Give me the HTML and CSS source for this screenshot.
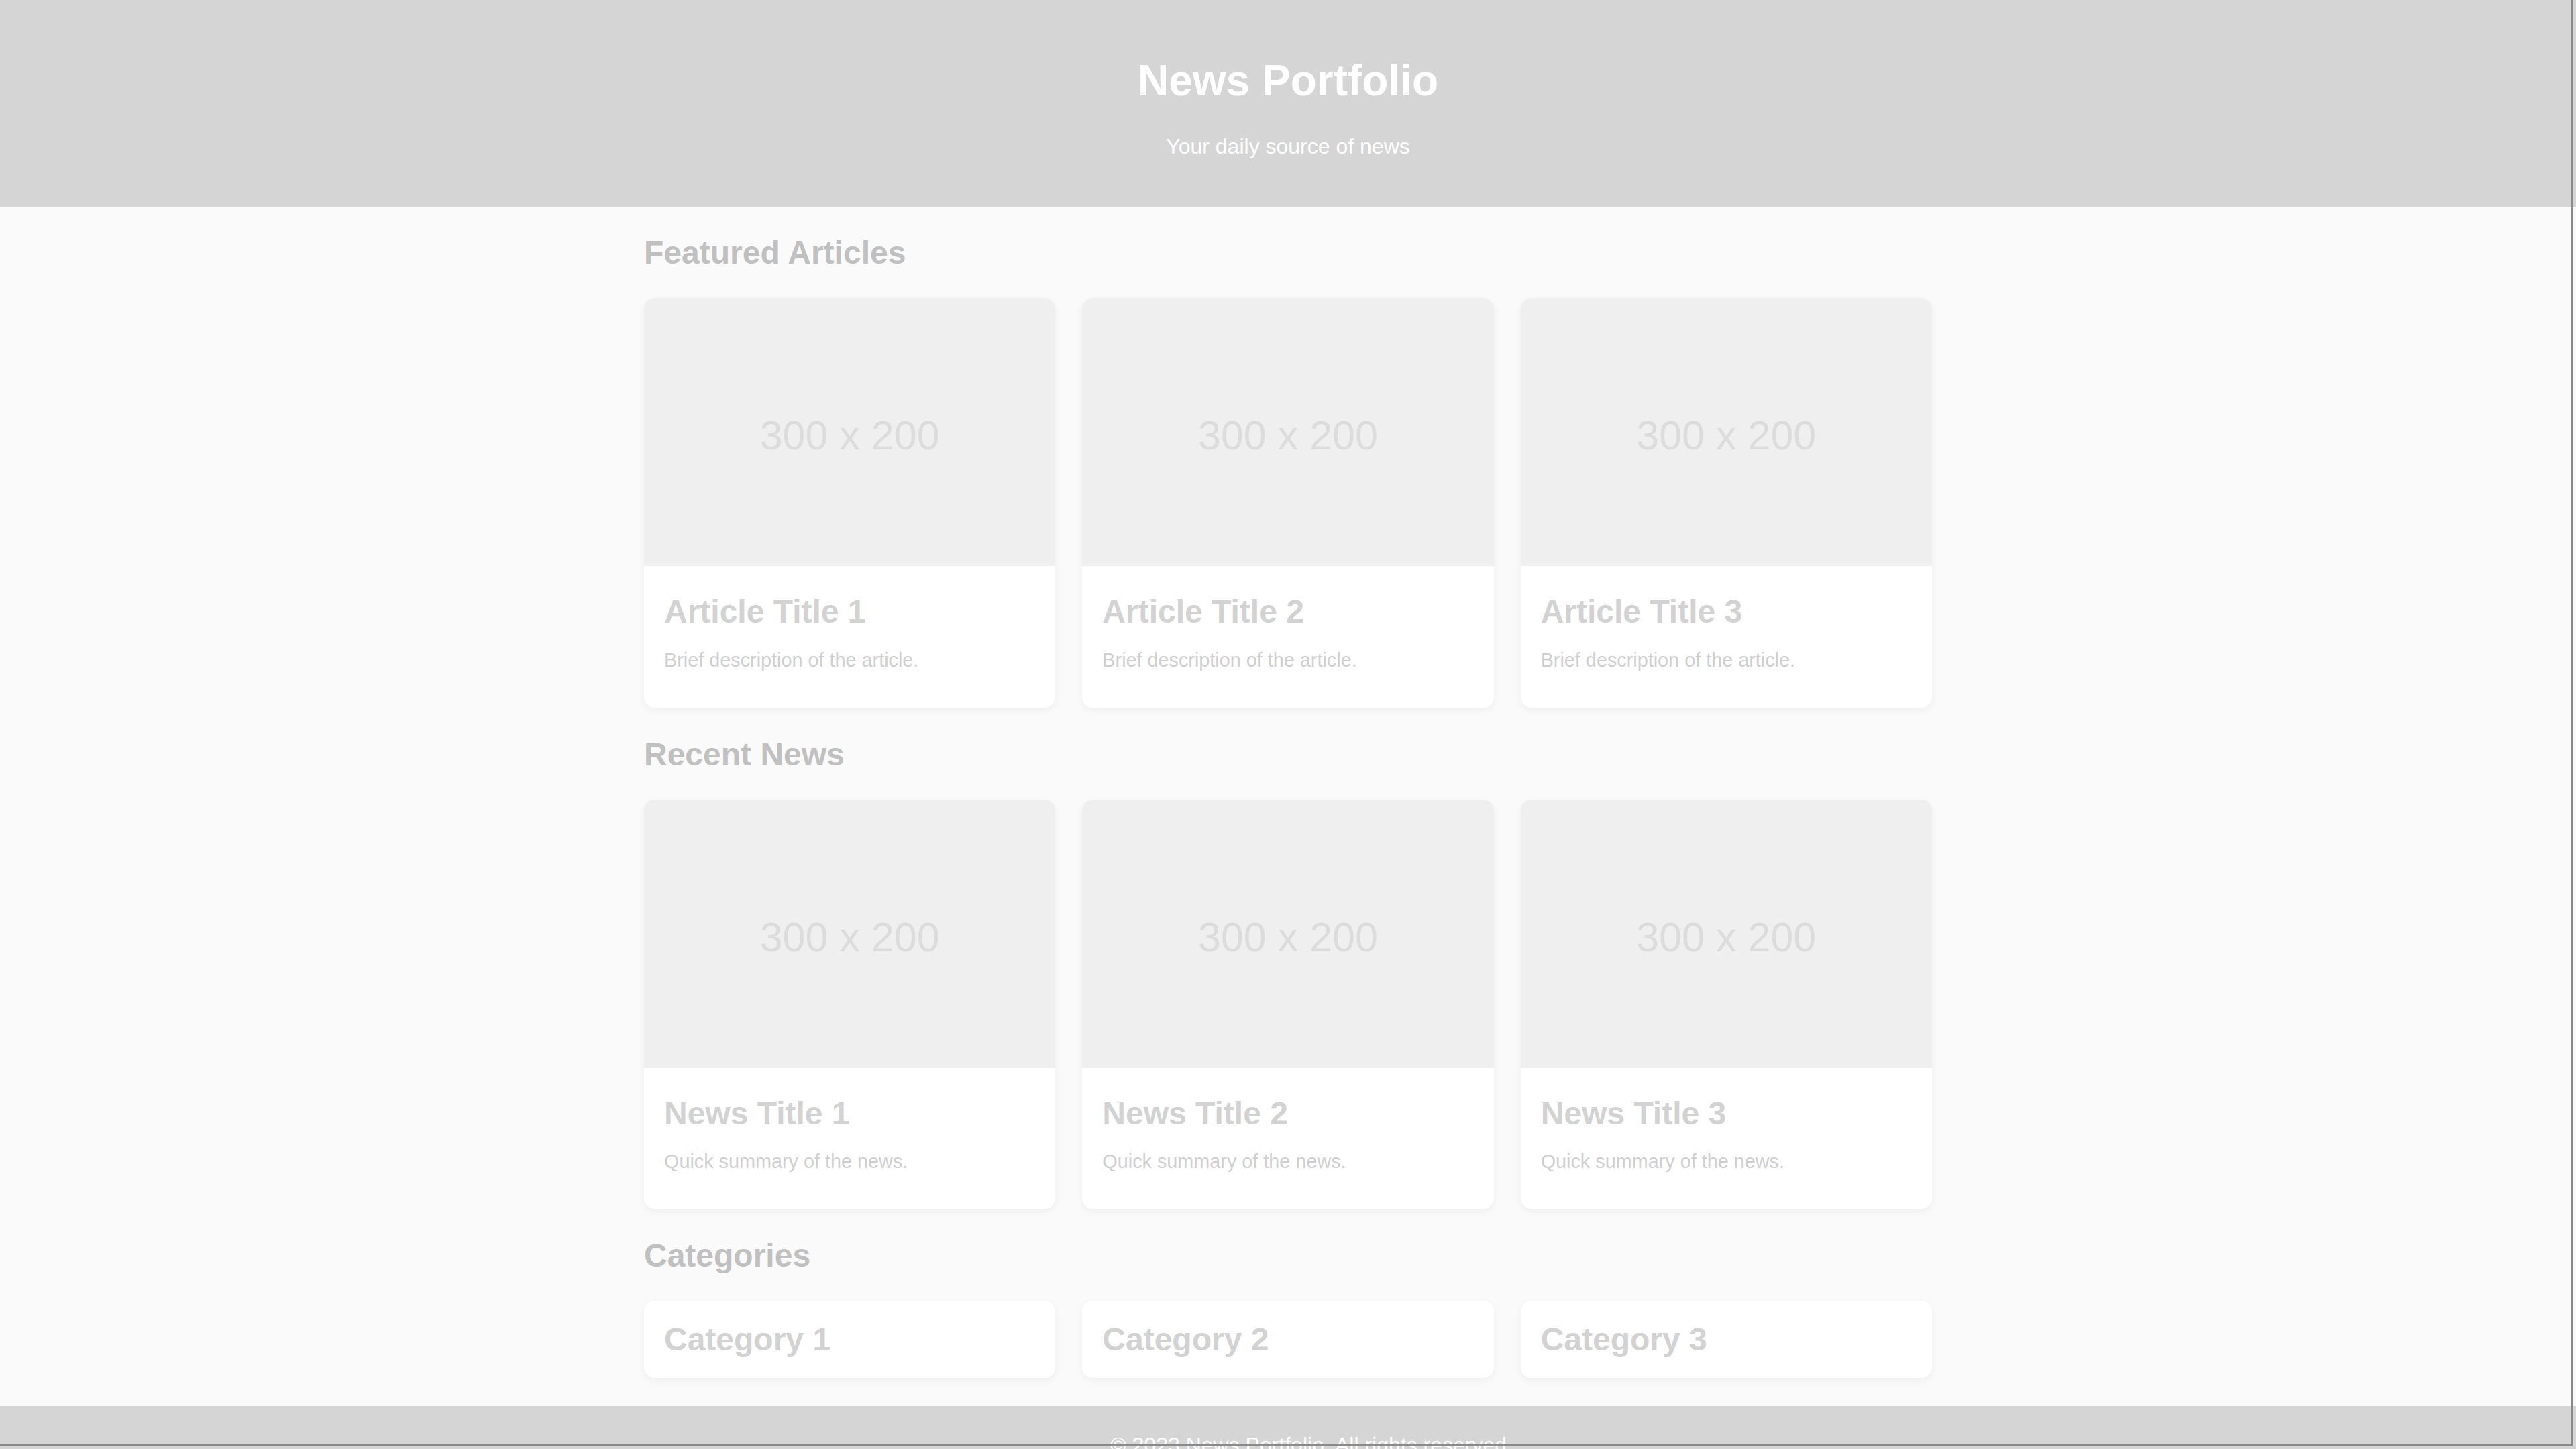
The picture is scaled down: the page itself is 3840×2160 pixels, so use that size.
FILE: index.html
```html
<!DOCTYPE html>
<html lang="en">
<head>
<meta charset="utf-8">
<title>News Portfolio</title>
<link rel="stylesheet" href="styles.css">
</head>
<body>
<header class="site-header">
  <h1 class="site-title">News Portfolio</h1>
  <p class="site-tagline">Your daily source of news</p>
</header>
<main class="container">
  <section class="section">
    <h2 class="section-title">Featured Articles</h2>
    <div class="grid">
      <article class="card">
        <div class="thumb">300 x 200</div>
        <div class="card-body">
          <h3 class="card-title">Article Title 1</h3>
          <p class="card-text">Brief description of the article.</p>
        </div>
      </article>
      <article class="card">
        <div class="thumb">300 x 200</div>
        <div class="card-body">
          <h3 class="card-title">Article Title 2</h3>
          <p class="card-text">Brief description of the article.</p>
        </div>
      </article>
      <article class="card">
        <div class="thumb">300 x 200</div>
        <div class="card-body">
          <h3 class="card-title">Article Title 3</h3>
          <p class="card-text">Brief description of the article.</p>
        </div>
      </article>
    </div>
  </section>
  <section class="section">
    <h2 class="section-title">Recent News</h2>
    <div class="grid">
      <article class="card">
        <div class="thumb">300 x 200</div>
        <div class="card-body">
          <h3 class="card-title">News Title 1</h3>
          <p class="card-text">Quick summary of the news.</p>
        </div>
      </article>
      <article class="card">
        <div class="thumb">300 x 200</div>
        <div class="card-body">
          <h3 class="card-title">News Title 2</h3>
          <p class="card-text">Quick summary of the news.</p>
        </div>
      </article>
      <article class="card">
        <div class="thumb">300 x 200</div>
        <div class="card-body">
          <h3 class="card-title">News Title 3</h3>
          <p class="card-text">Quick summary of the news.</p>
        </div>
      </article>
    </div>
  </section>
  <section class="section">
    <h2 class="section-title">Categories</h2>
    <div class="grid">
      <div class="card category"><h3 class="card-title">Category 1</h3></div>
      <div class="card category"><h3 class="card-title">Category 2</h3></div>
      <div class="card category"><h3 class="card-title">Category 3</h3></div>
    </div>
  </section>
</main>
<footer class="site-footer">
  <p class="footer-text">© 2023 News Portfolio. All rights reserved.</p>
</footer>
<div class="frame"></div>
</body>
</html>
```

FILE: styles.css
```css
html, body {
  margin: 0;
  padding: 0;
}
body {
  font-family: "Liberation Sans", Arial, sans-serif;
  font-size: 32px;
  background: #fafafa;
  color: #c8c8c8;
}
.site-header {
  background: #d5d5d5;
  color: #ffffff;
  text-align: center;
  padding: 40px 0;
}
.site-title {
  font-size: 64px;
  margin: 42.88px 0;
  color: #ffffff;
}
.site-tagline {
  margin: 32px 0;
  color: #ffffff;
}
.container {
  width: 1920px;
  margin: 0 auto;
}
.section {
  margin-bottom: 42px;
}
.section-title {
  font-size: 48px;
  margin: 40px 0;
  color: #c0c0c0;
}
.grid {
  display: grid;
  grid-template-columns: repeat(3, 1fr);
  gap: 40px;
}
.card {
  background: #ffffff;
  border-radius: 16px;
  overflow: hidden;
  box-shadow: 0 4px 12px rgba(0, 0, 0, 0.05);
}
.thumb {
  height: 390px;
  padding-top: 10px;
  background: #efefef;
  color: #dcdcdc;
  font-size: 61px;
  display: flex;
  align-items: center;
  justify-content: center;
}
.card-body {
  padding: 30px;
}
.card-title {
  font-size: 48px;
  margin: 10px 0 0;
  color: #d2d2d2;
}
.card-text {
  font-size: 28.8px;
  margin: 28.8px 0 24px;
  color: #cfcfcf;
}
.category {
  padding: 30px;
}
.category .card-title {
  margin: 0;
}
.site-footer {
  background: #d5d5d5;
  color: #ffffff;
  text-align: center;
  padding: 40px 0 40px 70px;
}
.footer-text {
  margin: 0;
}
.frame {
  position: fixed;
  top: 0;
  left: 0;
  right: 5px;
  bottom: 5px;
  border-right: 2px solid #8a8a8a;
  border-bottom: 2px solid #8a8a8a;
  pointer-events: none;
}
```
